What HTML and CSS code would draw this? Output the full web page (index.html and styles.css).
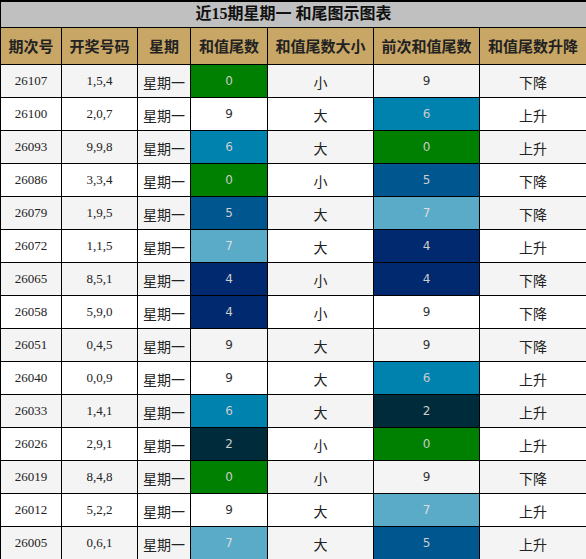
FILE: index.html
```html
<!DOCTYPE html>
<html lang="zh-CN">
<head>
    <meta charset="UTF-8">
    <title>近15期星期一 和尾图示图表</title>
    <link rel="stylesheet" href="styles.css">
</head>
<body>
    <table class="tb">
        <colgroup>
            <col class="c1"><col class="c2"><col class="c3"><col class="c4"><col class="c5"><col class="c6"><col class="c7">
        </colgroup>
        <tr class="title"><td colspan="7">近15期星期一 和尾图示图表</td></tr>
        <tr class="head">
            <th>期次号</th><th>开奖号码</th><th>星期</th><th>和值尾数</th><th>和值尾数大小</th><th>前次和值尾数</th><th>和值尾数升降</th>
        </tr>
        <tr class="gray"><td>26107</td><td>1,5,4</td><td class="wk">星期一</td><td class="n t0">0</td><td class="wk">小</td><td class="n">9</td><td class="wk">下降</td></tr>
        <tr><td>26100</td><td>2,0,7</td><td class="wk">星期一</td><td class="n">9</td><td class="wk">大</td><td class="n t6">6</td><td class="wk">上升</td></tr>
        <tr class="gray"><td>26093</td><td>9,9,8</td><td class="wk">星期一</td><td class="n t6">6</td><td class="wk">大</td><td class="n t0">0</td><td class="wk">上升</td></tr>
        <tr><td>26086</td><td>3,3,4</td><td class="wk">星期一</td><td class="n t0">0</td><td class="wk">小</td><td class="n t5">5</td><td class="wk">下降</td></tr>
        <tr class="gray"><td>26079</td><td>1,9,5</td><td class="wk">星期一</td><td class="n t5">5</td><td class="wk">大</td><td class="n t7">7</td><td class="wk">下降</td></tr>
        <tr><td>26072</td><td>1,1,5</td><td class="wk">星期一</td><td class="n t7">7</td><td class="wk">大</td><td class="n t4">4</td><td class="wk">上升</td></tr>
        <tr class="gray"><td>26065</td><td>8,5,1</td><td class="wk">星期一</td><td class="n t4">4</td><td class="wk">小</td><td class="n t4">4</td><td class="wk">下降</td></tr>
        <tr><td>26058</td><td>5,9,0</td><td class="wk">星期一</td><td class="n t4">4</td><td class="wk">小</td><td class="n">9</td><td class="wk">下降</td></tr>
        <tr class="gray"><td>26051</td><td>0,4,5</td><td class="wk">星期一</td><td class="n">9</td><td class="wk">大</td><td class="n">9</td><td class="wk">下降</td></tr>
        <tr><td>26040</td><td>0,0,9</td><td class="wk">星期一</td><td class="n">9</td><td class="wk">大</td><td class="n t6">6</td><td class="wk">上升</td></tr>
        <tr class="gray"><td>26033</td><td>1,4,1</td><td class="wk">星期一</td><td class="n t6">6</td><td class="wk">大</td><td class="n t2">2</td><td class="wk">上升</td></tr>
        <tr><td>26026</td><td>2,9,1</td><td class="wk">星期一</td><td class="n t2">2</td><td class="wk">小</td><td class="n t0">0</td><td class="wk">上升</td></tr>
        <tr class="gray"><td>26019</td><td>8,4,8</td><td class="wk">星期一</td><td class="n t0">0</td><td class="wk">小</td><td class="n">9</td><td class="wk">下降</td></tr>
        <tr><td>26012</td><td>5,2,2</td><td class="wk">星期一</td><td class="n">9</td><td class="wk">大</td><td class="n t7">7</td><td class="wk">上升</td></tr>
        <tr class="gray"><td>26005</td><td>0,6,1</td><td class="wk">星期一</td><td class="n t7">7</td><td class="wk">大</td><td class="n t5">5</td><td class="wk">上升</td></tr>
    </table>
</body>
</html>
```

FILE: styles.css
```css
body{
    margin: 0;
    font-family: "Liberation Serif", "Noto Sans CJK SC", serif;
}

.tb{
    width: 586px;
    border-collapse: collapse;
    table-layout: fixed;
    color: #222;
}
.c1{ width: 61px; }
.c2{ width: 76px; }
.c3{ width: 53px; }
.c4{ width: 77px; }
.c5{ width: 106px; }
.c6{ width: 106px; }
.c7{ width: 107px; }

.tb td, .tb th{
    border: 1px solid #000;
    text-align: center;
    padding: 0;
    font-size: 13px;
    line-height: 18px;
    height: 33px;
    box-sizing: border-box;
    background-color: #fff;
}

.title td{
    height: 26px;
    border-top-width: 2px;
    background-color: #c0c0c0;
    font-size: 16px;
    font-weight: bold;
    color: #111;
}

.head th{
    height: 37px;
    background-color: #c8a665;
    font-family: "Noto Sans CJK SC", sans-serif;
    font-size: 15px;
    font-weight: bold;
    color: #222;
}

.gray td{
    background-color: #f4f4f4;
}

.tb td.wk{
    font-family: "Noto Sans CJK SC", sans-serif;
    font-size: 14px;
    padding-top: 2px;
}

.tb td.n{
    font-family: "DejaVu Sans", sans-serif;
    font-size: 12px;
    color: #333;
}

.tb td.t0{ background-color: #008000; color: #ccc; }
.tb td.t2{ background-color: #002b3a; color: #ccc; }
.tb td.t4{ background-color: #00296f; color: #ccc; }
.tb td.t5{ background-color: #00578f; color: #ccc; }
.tb td.t6{ background-color: #0082ae; color: #ccc; }
.tb td.t7{ background-color: #5aabc8; color: #ddd; }
```
